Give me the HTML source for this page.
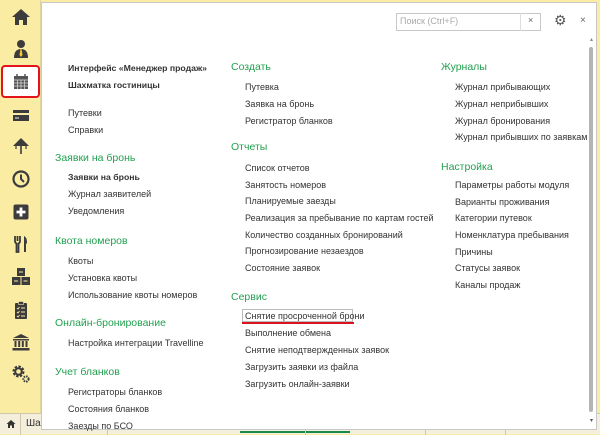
<!DOCTYPE html>
<html><head><meta charset="utf-8"><style>
*{margin:0;padding:0;box-sizing:border-box}
body{width:600px;height:434px;overflow:hidden;background:#fbeca4;font-family:"Liberation Sans",Arial,sans-serif;position:relative}
.side{position:absolute;left:0;top:0;width:41px;height:413px;background:#fbeca4;border-right:1px solid #e0d5a0}
.ic{position:absolute;left:11px;width:20px;height:20px}
.win{position:absolute;left:41px;top:2px;width:556px;height:428px;background:#fff;border:1px solid #c8c8c8}
.t{position:absolute;font-size:9px;color:#333;white-space:nowrap}
.b{font-weight:bold;font-size:8.7px}
.h{position:absolute;font-size:10.5px;color:#22a050;white-space:nowrap}
.bot{position:absolute;left:0;top:413px;width:600px;height:21px;background:#f4eedc;border-top:1px solid #d0c8a8}
</style></head><body>
<div class="side">
<svg class="ic" style="top:7px" viewBox="0 0 20 20"><path d="M10 2L1 10h3v8h4v-5h4v5h4v-8h3z" fill="#3c3c3c"/></svg>
<svg class="ic" style="top:39px" viewBox="0 0 20 20"><circle cx="10" cy="5" r="4" fill="#3c3c3c"/><path d="M3 19q0-9 7-9t7 9z" fill="#3c3c3c"/><path d="M9.5 10h1l1 6-1.5 2-1.5-2z" fill="#f4c830"/></svg>
<div style="position:absolute;left:1px;top:65px;width:39px;height:33px;background:#fff;border:2px solid #e3131b;border-radius:4px"></div>
<svg class="ic" style="top:72px" viewBox="0 0 20 20"><rect x="3" y="4" width="14" height="13" fill="#555"/><path d="M6 2v3M14 2v3" stroke="#555" stroke-width="1.5"/><path d="M3 8h14M3 11h14M3 14h14M6.5 8v9M10 8v9M13.5 8v9" stroke="#ddd" stroke-width=".7"/></svg>
<svg class="ic" style="top:106px" viewBox="0 0 20 20"><rect x="2" y="4" width="16" height="11" fill="#3c3c3c"/><rect x="2" y="7" width="16" height="2" fill="#fbeca4"/><rect x="4" y="11" width="4" height="2" fill="#999"/></svg>
<svg class="ic" style="top:136px" viewBox="0 0 20 20"><path d="M10 2L2 10h16z" fill="#3c3c3c"/><rect x="9.2" y="9" width="1.6" height="9" fill="#3c3c3c"/><path d="M5 10v3M15 10v3" stroke="#3c3c3c" stroke-width="1.2"/></svg>
<svg class="ic" style="top:169px" viewBox="0 0 20 20"><circle cx="10" cy="10" r="7.5" fill="none" stroke="#3c3c3c" stroke-width="2.2"/><path d="M10 5.5V10l3 3" fill="none" stroke="#3c3c3c" stroke-width="2"/></svg>
<svg class="ic" style="top:202px" viewBox="0 0 20 20"><rect x="2.5" y="2.5" width="15" height="15" rx="2" fill="#3c3c3c"/><path d="M10 5.5v9M5.5 10h9" stroke="#fff" stroke-width="2.8"/></svg>
<svg class="ic" style="top:234px" viewBox="0 0 20 20"><path d="M4 2v5q0 2 1.5 2.5V18h2V9.5Q9 9 9 7V2M6.5 2v5" fill="none" stroke="#3c3c3c" stroke-width="1.8"/><path d="M13 18V2q3 1 3 7l-1 1v8z" fill="#3c3c3c"/></svg>
<svg class="ic" style="top:267px" viewBox="0 0 20 20"><rect x="6" y="1" width="8" height="8" fill="#3c3c3c"/><rect x="1" y="10" width="8.5" height="8" fill="#3c3c3c"/><rect x="10.5" y="10" width="8.5" height="8" fill="#3c3c3c"/><path d="M8 5h4M3 14h4M12.5 14h4" stroke="#fbeca4" stroke-width="1"/></svg>
<svg class="ic" style="top:300px" viewBox="0 0 20 20"><rect x="4" y="3" width="12" height="16" rx="1" fill="#3c3c3c"/><rect x="7.5" y="1.5" width="5" height="3" fill="#3c3c3c" stroke="#fbeca4" stroke-width=".6"/><path d="M6 8l1 1 1.5-2M6 12l1 1 1.5-2M6 16l1 1 1.5-2M10 8h4M10 12h4M10 16h4" stroke="#fbeca4" stroke-width=".9" fill="none"/></svg>
<svg class="ic" style="top:332px" viewBox="0 0 20 20"><path d="M10 2L2 6h16z" fill="#3c3c3c"/><rect x="2" y="7" width="16" height="1.5" fill="#3c3c3c"/><path d="M4.5 9v6M8.2 9v6M11.8 9v6M15.5 9v6" stroke="#3c3c3c" stroke-width="2"/><rect x="1.5" y="16" width="17" height="2.5" fill="#3c3c3c"/></svg>
<svg class="ic" style="top:364px" viewBox="0 0 20 20"><circle cx="7.5" cy="7.5" r="4.5" fill="none" stroke="#3c3c3c" stroke-width="3" stroke-dasharray="2.2 1.3"/><circle cx="7.5" cy="7.5" r="3.3" fill="none" stroke="#3c3c3c" stroke-width="2"/><circle cx="15" cy="15" r="2.6" fill="none" stroke="#3c3c3c" stroke-width="2" stroke-dasharray="1.5 0.9"/></svg>
</div>
<div class="bot">
<div style="position:absolute;left:0;top:0;width:21px;height:21px;border-right:1px solid #d0c8a8"></div>
<svg style="position:absolute;left:6px;top:5px" width="10" height="10" viewBox="0 0 20 20"><path d="M10 2L1 10h3v8h4v-5h4v5h4v-8h3z" fill="#333"/></svg>
<div style="position:absolute;left:26px;top:4px;font-size:10px;color:#333">Ша</div>
<div style="position:absolute;left:107px;top:0;height:21px;border-left:1px solid #d0c8a8"></div>
<div style="position:absolute;left:240px;top:17px;width:110px;height:2px;background:#1a8a4a"></div>
<div style="position:absolute;left:305px;top:0;height:21px;border-left:1px solid #d0c8a8"></div>
<div style="position:absolute;left:425px;top:0;height:21px;border-left:1px solid #d0c8a8"></div>
<div style="position:absolute;left:505px;top:0;height:21px;border-left:1px solid #d0c8a8"></div>
</div>
<div class="win">
<div style="position:absolute;left:354px;top:10px;width:145px;height:18px;border:1px solid #c8c8c8"></div>
<div style="position:absolute;left:358px;top:13px;font-size:9px;color:#aaa">Поиск (Ctrl+F)</div>
<div style="position:absolute;left:478px;top:10px;width:1px;height:18px;background:#ddd"></div>
<div style="position:absolute;left:486px;top:12px;font-size:9px;color:#666">×</div>
<div style="position:absolute;left:512px;top:9px;font-size:14px;color:#555">⚙</div>
<div style="position:absolute;left:538px;top:12px;font-size:10px;color:#666">×</div>
<div style="position:absolute;left:547px;top:44px;width:4px;height:365px;background:#b4b4b4;border-radius:2px"></div>
<div style="position:absolute;left:548px;top:33px;font-size:6px;color:#888">▴</div>
<div style="position:absolute;left:548px;top:414px;font-size:6px;color:#555">▾</div>
</div>
<div class="t b" style="left:68px;top:63px">Интерфейс «Менеджер продаж»</div>
<div class="t b" style="left:68px;top:80px">Шахматка гостиницы</div>
<div class="t" style="left:68px;top:108px">Путевки</div>
<div class="t" style="left:68px;top:125px">Справки</div>
<div class="h" style="left:55px;top:152px">Заявки на бронь</div>
<div class="t b" style="left:68px;top:172px">Заявки на бронь</div>
<div class="t" style="left:68px;top:189px">Журнал заявителей</div>
<div class="t" style="left:68px;top:206px">Уведомления</div>
<div class="h" style="left:55px;top:235px">Квота номеров</div>
<div class="t" style="left:68px;top:256px">Квоты</div>
<div class="t" style="left:68px;top:273px">Установка квоты</div>
<div class="t" style="left:68px;top:290px">Использование квоты номеров</div>
<div class="h" style="left:55px;top:317px">Онлайн-бронирование</div>
<div class="t" style="left:68px;top:338px">Настройка интеграции Travelline</div>
<div class="h" style="left:55px;top:366px">Учет бланков</div>
<div class="t" style="left:68px;top:387px">Регистраторы бланков</div>
<div class="t" style="left:68px;top:404px">Состояния бланков</div>
<div class="t" style="left:68px;top:421px">Заезды по БСО</div>

<div class="h" style="left:231px;top:61px">Создать</div>
<div class="t" style="left:245px;top:82px">Путевка</div>
<div class="t" style="left:245px;top:99px">Заявка на бронь</div>
<div class="t" style="left:245px;top:116px">Регистратор бланков</div>
<div class="h" style="left:231px;top:141px">Отчеты</div>
<div class="t" style="left:245px;top:163px">Список отчетов</div>
<div class="t" style="left:245px;top:180px">Занятость номеров</div>
<div class="t" style="left:245px;top:196px">Планируемые заезды</div>
<div class="t" style="left:245px;top:213px">Реализация за пребывание по картам гостей</div>
<div class="t" style="left:245px;top:230px">Количество созданных бронирований</div>
<div class="t" style="left:245px;top:246px">Прогнозирование незаездов</div>
<div class="t" style="left:245px;top:263px">Состояние заявок</div>
<div class="h" style="left:231px;top:291px">Сервис</div>
<div style="position:absolute;left:242px;top:309px;width:111px;height:13px;border:1px solid #bbb"></div>
<div style="position:absolute;left:242px;top:322px;width:112px;height:2px;background:#d8141c"></div>
<div class="t" style="left:245px;top:311px">Снятие просроченной брони</div>
<div class="t" style="left:245px;top:328px">Выполнение обмена</div>
<div class="t" style="left:245px;top:345px">Снятие неподтвержденных заявок</div>
<div class="t" style="left:245px;top:362px">Загрузить заявки из файла</div>
<div class="t" style="left:245px;top:379px">Загрузить онлайн-заявки</div>

<div class="h" style="left:441px;top:61px">Журналы</div>
<div class="t" style="left:455px;top:82px">Журнал прибывающих</div>
<div class="t" style="left:455px;top:99px">Журнал неприбывших</div>
<div class="t" style="left:455px;top:116px">Журнал бронирования</div>
<div class="t" style="left:455px;top:132px">Журнал прибывших по заявкам</div>
<div class="h" style="left:441px;top:161px">Настройка</div>
<div class="t" style="left:455px;top:180px">Параметры работы модуля</div>
<div class="t" style="left:455px;top:197px">Варианты проживания</div>
<div class="t" style="left:455px;top:213px">Категории путевок</div>
<div class="t" style="left:455px;top:230px">Номенклатура пребывания</div>
<div class="t" style="left:455px;top:247px">Причины</div>
<div class="t" style="left:455px;top:263px">Статусы заявок</div>
<div class="t" style="left:455px;top:280px">Каналы продаж</div>
</body></html>
